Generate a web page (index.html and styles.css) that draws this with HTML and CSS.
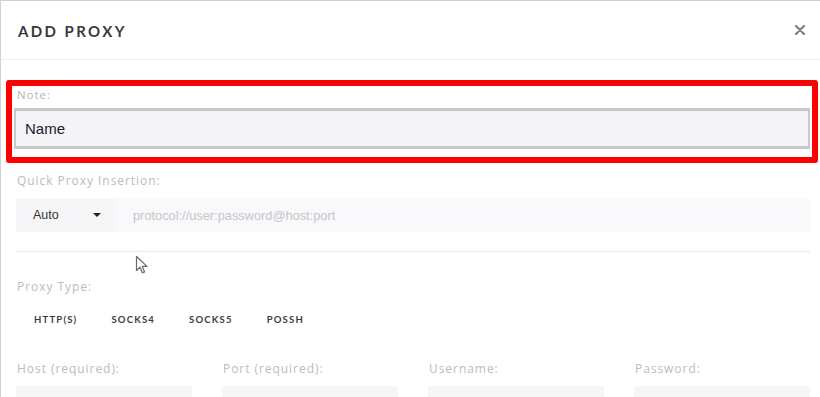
FILE: index.html
```html
<!DOCTYPE html>
<html>
<head>
<meta charset="utf-8">
<link rel="stylesheet" href="styles.css">
</head>
<body>
<div class="modal">
  <div class="header">
    <h1 class="title">ADD PROXY</h1>
    <svg class="close" width="10" height="10" viewBox="0 0 10 10"><path d="M1 1L9 9M9 1L1 9" stroke="#7a7a7a" stroke-width="2" stroke-linecap="round"/></svg>
  </div>
  <div class="content">
    <div class="highlight">
      <div class="label note-label">Note:</div>
      <div class="note-input">Name</div>
    </div>
    <div class="label quick-label">Quick Proxy Insertion:</div>
    <div class="quick-row">
      <div class="select"><span>Auto</span><span class="caret"></span></div>
      <div class="quick-input">protocol://user:password@host:port</div>
    </div>
    <div class="sep"></div>
    <div class="label type-label">Proxy Type:</div>
    <div class="types">
      <span class="type">HTTP(S)</span>
      <span class="type">SOCKS4</span>
      <span class="type">SOCKS5</span>
      <span class="type">POSSH</span>
    </div>
    <div class="fields">
      <div class="field"><div class="label">Host (required):</div><div class="box"></div></div>
      <div class="field"><div class="label">Port (required):</div><div class="box"></div></div>
      <div class="field"><div class="label">Username:</div><div class="box"></div></div>
      <div class="field"><div class="label">Password:</div><div class="box"></div></div>
    </div>
  </div>
  <svg class="cursor" width="14" height="20" viewBox="0 0 14 20"><path d="M1.5 1.5L1.5 15.5L5 12.2L7.4 17.8L9.6 16.9L7.3 11.4L12 11.4Z" fill="#fff" stroke="#6a6a6a" stroke-width="1.2" stroke-linejoin="round"/></svg>
</div>
</body>
</html>
```
FILE: styles.css
```css
html, body {
  margin: 0;
  padding: 0;
  background: #fff;
}
body {
  width: 820px;
  height: 397px;
  overflow: hidden;
  font-family: "Open Sans", "Liberation Sans", sans-serif;
}
.modal {
  position: relative;
  height: 397px;
  box-sizing: border-box;
  border-top: 1px solid #cfcfcf;
  border-left: 1px solid #d2d2d2;
  overflow: hidden;
}
.header {
  height: 58px;
  display: flex;
  align-items: center;
  justify-content: space-between;
  padding: 0 15px 0 17px;
  border-bottom: 1px solid #f0f0f0;
}
.title {
  margin: 0;
  font-family: Lato, "Open Sans", sans-serif;
  font-weight: 700;
  font-size: 15px;
  letter-spacing: 2.4px;
  color: #3a3a3c;
  padding-top: 1px;
}
.close {
  display: block;
}
.content {
  padding: 20px 10px 0 15px;
}
.label {
  font-size: 12px;
  line-height: 18px;
  color: #bcbcbc;
  letter-spacing: 0.95px;
  padding-left: 1px;
}
.highlight {
  margin: 0 -8px 0 -10px;
  border: 6px solid #ff0000;
  border-radius: 3px;
  padding: 0 2px 8px;
}
.note-label {
  font-size: 11.5px;
  padding-left: 3px;
  color: #b5b5b5;
}
.note-input {
  margin-top: 4px;
  height: 35px;
  box-sizing: content-box;
  border: 3px solid #c8c8cc;
  border-left-width: 2px;
  border-right-width: 2px;
  background: #f4f3f8;
  font-family: "Liberation Sans", Arial, sans-serif;
  font-size: 15px;
  line-height: 35px;
  color: #22202a;
  padding-left: 9px;
}
.quick-label {
  margin-top: 9px;
}
.quick-row {
  margin-top: 8px;
  height: 34px;
  display: flex;
  font-family: "Liberation Sans", Arial, sans-serif;
  font-size: 12.5px;
}
.select {
  width: 99px;
  background: #f6f6f9;
  display: flex;
  align-items: center;
  padding-left: 17px;
  box-sizing: border-box;
  color: #333;
}
.caret {
  margin-left: 34px;
  width: 0;
  height: 0;
  border-left: 4px solid transparent;
  border-right: 4px solid transparent;
  border-top: 4px solid #222;
}
.quick-input {
  flex: 1;
  background: #f9f8fb;
  display: flex;
  align-items: center;
  padding-left: 18px;
  color: #c6c6c8;
  font-size: 12.8px;
}
.sep {
  margin-top: 19px;
  height: 1px;
  background: #e8e8e8;
}
.type-label {
  margin-top: 26px;
}
.types {
  margin-top: 9px;
  height: 28px;
  display: flex;
  align-items: center;
  padding-left: 1px;
}
.type {
  font-family: Lato, "Open Sans", sans-serif;
  font-weight: 700;
  font-size: 9.5px;
  letter-spacing: 1.2px;
  color: #3c3c3c;
  padding: 0 17px;
}
.fields {
  margin-top: 27px;
  display: grid;
  grid-template-columns: repeat(4, 1fr);
  column-gap: 30px;
}
.box {
  margin-top: 8px;
  height: 34px;
  background: #f6f6f9;
}
.cursor {
  position: absolute;
  left: 134px;
  top: 254px;
}
```
